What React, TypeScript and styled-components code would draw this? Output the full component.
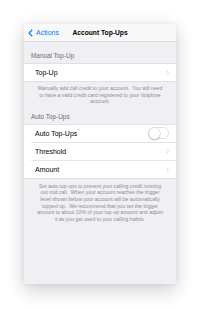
import React from "react";
import styled, { createGlobalStyle } from "styled-components";

const GlobalStyle = createGlobalStyle`
  html, body { margin: 0; padding: 0; background: #ffffff; }
  * { box-sizing: border-box; }
`;

const Stage = styled.div`
  width: 200px;
  height: 309px;
  padding: 24px;
  font-family: "Liberation Sans", Arial, sans-serif;
`;

const Phone = styled.div`
  width: 152px;
  height: 260px;
  background: #efeff4;
  box-shadow: 0 6px 18px rgba(0, 0, 0, 0.2), 0 0 5px rgba(0, 0, 0, 0.06);
  overflow: hidden;
  display: flex;
  flex-direction: column;
`;

const NavBar = styled.div`
  height: 18px;
  background: #f8f8f8;
  border-bottom: 1px solid #d9d9dd;
  display: grid;
  grid-template-columns: 1fr auto 1fr;
  align-items: center;
`;

const Back = styled.div`
  display: flex;
  align-items: center;
  gap: 3px;
  padding-left: 4px;
  color: #007aff;
  font-size: 7px;
`;

const Title = styled.div`
  font-size: 6.7px;
  font-weight: 700;
  color: #000;
`;

const SectionHeader = styled.div<{ $h: number }>`
  height: ${(p) => p.$h}px;
  display: flex;
  align-items: flex-end;
  padding: 0 0 4px 7px;
  font-size: 6.4px;
  line-height: 7px;
  color: #6d6d72;
`;

const Group = styled.div`
  background: #ffffff;
  border-top: 1px solid #e0e0e4;
  border-bottom: 1px solid #e0e0e4;
`;

const Row = styled.div`
  position: relative;
  height: 17px;
  display: flex;
  align-items: center;
  justify-content: space-between;
  padding: 0 7px 0 11px;
  font-size: 7px;
  color: #000;
  & + &::before {
    content: "";
    position: absolute;
    top: -1px;
    left: 7px;
    right: 0;
    height: 1px;
    background: #e4e4e8;
  }
  & + & {
    margin-top: 1px;
  }
`;

const Footer = styled.div<{ $pt: number }>`
  padding: ${(p) => p.$pt}px 2px 0;
  text-align: center;
  font-size: 5.15px;
  line-height: 6.6px;
  color: #8e8e93;
  white-space: nowrap;
`;

const Toggle = styled.span`
  position: relative;
  width: 21px;
  height: 12px;
  border-radius: 6px;
  border: 1px solid #e3e3e6;
  background: #fff;
`;

const Knob = styled.span`
  position: absolute;
  top: -0.5px;
  left: -0.5px;
  width: 11px;
  height: 11px;
  border-radius: 50%;
  background: #fff;
  box-shadow: 0 1px 2px rgba(0, 0, 0, 0.3), 0 0 0 0.5px rgba(0, 0, 0, 0.08);
`;

const Chevron = () => (
  <svg width="3" height="5" viewBox="0 0 6 10" style={{ display: "block" }}>
    <path d="M1 1 L5 5 L1 9" fill="none" stroke="#c7c7cc" strokeWidth="1.4" />
  </svg>
);

const BackChevron = () => (
  <svg width="5" height="8" viewBox="0 0 10 16" style={{ display: "block" }}>
    <path d="M8.5 1.5 L2 8 L8.5 14.5" fill="none" stroke="#007aff" strokeWidth="2.2" />
  </svg>
);

export default function App() {
  return (
    <>
      <GlobalStyle />
      <Stage>
        <Phone>
          <NavBar>
            <Back>
              <BackChevron />
              <span>Actions</span>
            </Back>
            <Title>Account Top-Ups</Title>
            <div />
          </NavBar>

          <SectionHeader $h={21}>Manual Top-Up</SectionHeader>
          <Group>
            <Row>
              <span>Top-Up</span>
              <Chevron />
            </Row>
          </Group>
          <Footer $pt={3}>
            Manually add call credit to your account.&nbsp; You will need
            <br />
            to have a valid credit card registered to your Voipfone
            <br />
            account.
          </Footer>

          <SectionHeader $h={19}>Auto Top-Ups</SectionHeader>
          <Group>
            <Row>
              <span>Auto Top-Ups</span>
              <Toggle>
                <Knob />
              </Toggle>
            </Row>
            <Row>
              <span>Threshold</span>
              <Chevron />
            </Row>
            <Row>
              <span>Amount</span>
              <Chevron />
            </Row>
          </Group>
          <Footer $pt={4}>
            Set auto top-ups to prevent your calling credit running
            <br />
            out mid call.&nbsp; When your account reaches the trigger
            <br />
            level shown below your account will be automatically
            <br />
            topped up.&nbsp; We recommend that you set the trigger
            <br />
            amount to about 10% of your top-up amount and adjust
            <br />
            it as you get used to your calling habits.
          </Footer>
        </Phone>
      </Stage>
    </>
  );
}
